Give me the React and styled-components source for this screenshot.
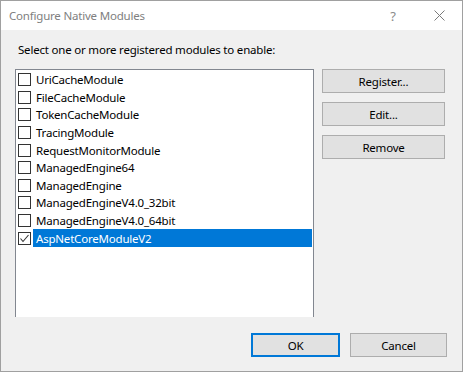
import React from 'react'
import styled, { createGlobalStyle } from 'styled-components'

const GlobalStyle = createGlobalStyle`
  html, body {
    margin: 0;
    padding: 0;
    background: #ffffff;
  }
  * {
    box-sizing: border-box;
  }
`

const Window = styled.div`
  width: 463px;
  height: 372px;
  border: 1px solid #a0a0a0;
  display: flex;
  flex-direction: column;
  font-family: "Segoe UI", "Noto Sans", "Open Sans", sans-serif;
  font-size: 11.5px;
  letter-spacing: -0.2px;
  color: #000;
`
const TitleBar = styled.div`
  height: 29px;
  background: #ffffff;
  display: flex;
  align-items: center;
  padding-left: 8px;
`
const Title = styled.span`
  flex: 1;
  color: #808080;
`
const TitleButton = styled.div`
  width: 46px;
  height: 29px;
  display: flex;
  align-items: center;
  justify-content: center;
  color: #8a8a8a;
  font-size: 13px;
`
const Body = styled.div`
  flex: 1;
  background: #f0f0f0;
  padding: 12px 17px 14px 14px;
  display: flex;
  flex-direction: column;
`
const Label = styled.div`
  line-height: 16px;
  margin-bottom: 11px;
  padding-left: 3px;
`
const Main = styled.div`
  display: flex;
  gap: 8px;
  height: 248px;
`
const ListBox = styled.div`
  width: 299px;
  background: #ffffff;
  border: 1px solid #828790;
  border-bottom: none;
  padding: 1px 1px 0 2px;
`
const Row = styled.div`
  height: 17.6px;
  display: flex;
  align-items: center;
`
const Check = styled.div`
  width: 13px;
  height: 13px;
  border: 1px solid #333333;
  background: #ffffff;
  flex: none;
  display: flex;
  align-items: center;
  justify-content: center;
`
const ItemText = styled.div`
  flex: 1;
  height: 100%;
  margin-left: 2px;
  padding-left: 3px;
  display: flex;
  align-items: center;
  background: ${p => (p.$selected ? '#0078d7' : 'transparent')};
  color: ${p => (p.$selected ? '#ffffff' : '#000000')};
`
const SideButtons = styled.div`
  display: flex;
  flex-direction: column;
  gap: 9px;
  width: 123px;
`
const Button = styled.button`
  height: 24px;
  width: ${p => p.$width || '100%'};
  background: #e1e1e1;
  border: ${p => (p.$default ? '2px solid #0078d7' : '1px solid #adadad')};
  font: inherit;
  letter-spacing: inherit;
  color: #000;
  padding: 0;
`
const Footer = styled.div`
  display: flex;
  justify-content: flex-end;
  gap: 10px;
  margin-top: 16px;
  margin-right: -2px;
`

const modules = [
  { name: 'UriCacheModule' },
  { name: 'FileCacheModule' },
  { name: 'TokenCacheModule' },
  { name: 'TracingModule' },
  { name: 'RequestMonitorModule' },
  { name: 'ManagedEngine64' },
  { name: 'ManagedEngine' },
  { name: 'ManagedEngineV4.0_32bit' },
  { name: 'ManagedEngineV4.0_64bit' },
  { name: 'AspNetCoreModuleV2', checked: true, selected: true },
]

const App = () => {
  return (
    <>
      <GlobalStyle />
      <Window>
        <TitleBar>
          <Title>Configure Native Modules</Title>
          <TitleButton>?</TitleButton>
          <TitleButton>
            <svg width="11" height="11" viewBox="0 0 11 11">
              <path d="M0.5 0.5 L10.5 10.5 M10.5 0.5 L0.5 10.5" stroke="#7a7a7a" strokeWidth="1" fill="none" />
            </svg>
          </TitleButton>
        </TitleBar>
        <Body>
          <Label>Select one or more registered modules to enable:</Label>
          <Main>
            <ListBox>
              {modules.map(m => (
                <Row key={m.name}>
                  <Check>
                    {m.checked && (
                      <svg width="11" height="11" viewBox="0 0 11 11">
                        <path d="M1.5 5.5 L4 8.5 L9.5 2" stroke="#333" strokeWidth="1.1" fill="none" />
                      </svg>
                    )}
                  </Check>
                  <ItemText $selected={m.selected}>{m.name}</ItemText>
                </Row>
              ))}
            </ListBox>
            <SideButtons>
              <Button>Register...</Button>
              <Button>Edit...</Button>
              <Button>Remove</Button>
            </SideButtons>
          </Main>
          <Footer>
            <Button $default $width="89px">OK</Button>
            <Button $width="97px">Cancel</Button>
          </Footer>
        </Body>
      </Window>
    </>
  )
}

export default App
